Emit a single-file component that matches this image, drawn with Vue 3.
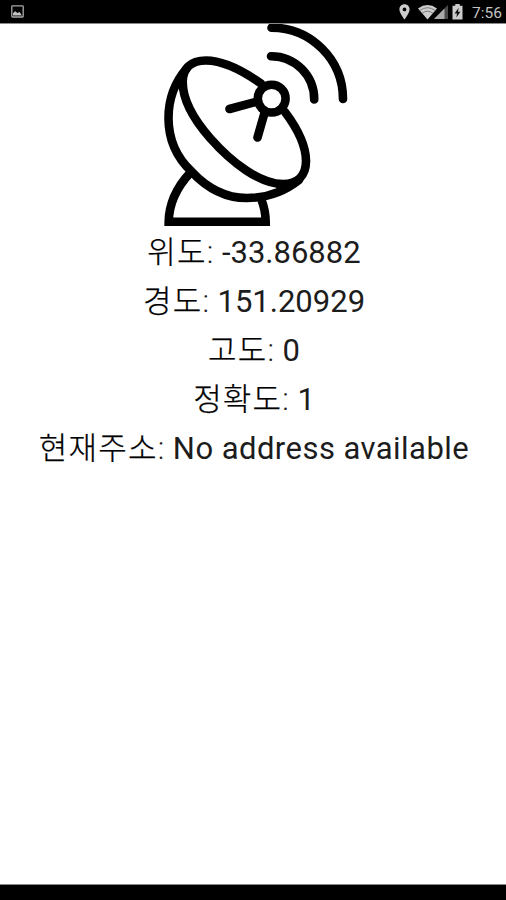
<template>
  <div class="screen">
    <header class="status-bar">
      <svg class="icon-picture" width="13" height="13" viewBox="0 0 13 13">
        <rect x="0.8" y="0.8" width="11.4" height="11.2" rx="0.8" fill="none" stroke="#aaa" stroke-width="1.3" />
        <path d="M2 10.5V8.2L4.2 6.3 6.4 8 8.6 7 11 10.5z" fill="#c4c4c4" />
      </svg>
      <div class="status-right">
        <!-- ubicación -->
        <svg class="icon-pin" width="11" height="16" viewBox="0 0 11 16">
          <path d="M5.5 0.3C2.5 0.3 0.4 2.5 0.4 5.4c0 3.6 5.1 10 5.1 10s5.1-6.4 5.1-10c0-2.9-2.1-5.1-5.1-5.1zm0 3.2a1.9 1.9 0 1 1 0 3.8 1.9 1.9 0 0 1 0-3.8z" fill="#ccc" fill-rule="evenodd" />
        </svg>
        <!-- wifi -->
        <svg class="icon-wifi" width="19" height="15" viewBox="0 0 19 15">
          <path d="M9.5 14.5L0 3.5Q9.5-3.3 19 3.5z" fill="#ccc" />
          <path d="M1.6 5.6Q9.5-0.2 17.4 5.6M4 8.2Q9.5 4.2 15 8.2" fill="none" stroke="#666" stroke-width="0.8" />
        </svg>
        <!-- señal -->
        <svg class="icon-signal" width="14" height="14" viewBox="0 0 14 14">
          <path d="M0 14L14 0V14z" fill="#4a4a4a" />
          <path d="M0 14L10.5 3.5V14z" fill="#aaa" />
        </svg>
        <!-- batería -->
        <svg class="icon-battery" width="11" height="16" viewBox="0 0 11 16">
          <path d="M3.3 0H7.7V1.8H10.5V15.5H0.5V1.8H3.3z" fill="#ccc" />
          <path d="M6.6 3.8L2.6 9.6H5L4.4 13.6 8.4 7.8H6z" fill="#111" />
        </svg>
        <span class="clock">7:56</span>
      </div>
    </header>

    <main class="content">
      <svg class="dish" width="210" height="204" viewBox="148 24 210 204">
        <g fill="none" stroke="#000" stroke-width="8.6" stroke-linecap="round" stroke-linejoin="round">
          <!-- ondas -->
          <path d="M271.5 27.7A71.5 71.5 0 0 1 343 99" />
          <path d="M271 56.2A43 43 0 0 1 314.2 99.5" />
          <!-- plato -->
          <path d="M261 83.5C239 68 220 60.5 206 60.5C190 60.5 182.7 69 182.7 82C182.7 101 196 122 210 138C232 163 260 184 283 184C298 184 306 175 306 161C306 146 297 128 285 112" />
          <path d="M187 68C174 83 168.5 99 168.5 118C168.5 140 176 157 191.7 171.7C207 188 226 198 246.7 198C266 198 284 192 299 180" />
          <path d="M279 188L296 182" stroke-width="5" />
          <!-- base -->
          <path d="M190 173C177 187 169 204 168.7 221.8H265.7Q265.5 210 261.5 200" stroke-linejoin="miter" stroke-linecap="butt" />
          <!-- receptor -->
          <path d="M229.5 109L256 101.8M257.5 137.5L264.8 112" />
          <circle cx="271.7" cy="98.6" r="13.9" />
        </g>
      </svg>

      <p v-for="row in rows" :key="row.label" class="row">
        <span class="label">{{ row.label }}</span><span class="colon">:</span> <span :class="{ number: row.numeric }">{{ row.value }}</span>
      </p>
    </main>

    <footer class="nav-bar"></footer>
  </div>
</template>

<script setup>
const rows = [
  { label: '위도', value: '-33.86882', numeric: true },
  { label: '경도', value: '151.20929', numeric: true },
  { label: '고도', value: '0', numeric: true },
  { label: '정확도', value: '1', numeric: true },
  { label: '현재주소', value: 'No address available', numeric: false }
]
</script>

<style>
body {
  margin: 0;
  background: #fff;
}
</style>

<style scoped>
.screen {
  display: flex;
  flex-direction: column;
  height: 900px;
  overflow: hidden;
  background: #fff;
  font-family: Roboto, "Noto Sans CJK KR", sans-serif;
}

.status-bar {
  display: flex;
  justify-content: space-between;
  align-items: flex-start;
  box-sizing: border-box;
  height: 24px;
  flex: none;
  padding: 4px 4px 0 11px;
  background: #000;
  border-bottom: 1px solid #8a8a8a;
}

.icon-picture {
  margin-top: 1px;
}

.status-right {
  display: flex;
  align-items: flex-start;
}

.icon-wifi {
  margin: 1px 0 0 8px;
}

.icon-signal {
  margin: 1px 0 0 -3px;
}

.icon-battery {
  margin-left: 4px;
}

.clock {
  margin-left: 9px;
  font-size: 15.5px;
  line-height: 18px;
  color: #c4c4c4;
}

.content {
  flex: 1;
  display: flex;
  flex-direction: column;
  align-items: center;
}

.dish {
  display: block;
  flex: none;
}

.row {
  margin: 0;
  padding-left: 2px;
  height: 49px;
  line-height: 49px;
  font-size: 31px;
  letter-spacing: 0.45px;
  white-space: nowrap;
  color: #1c1c1c;
}

.label {
  font-weight: 300;
  letter-spacing: 1.2px;
  color: #000;
  -webkit-text-stroke: 0.25px #000;
}

.colon {
  font-weight: 300;
}

.number {
  letter-spacing: 0;
}

.nav-bar {
  flex: none;
  box-sizing: border-box;
  height: 16px;
  background: #000;
  border-top: 1px solid #8a8a8a;
}
</style>
